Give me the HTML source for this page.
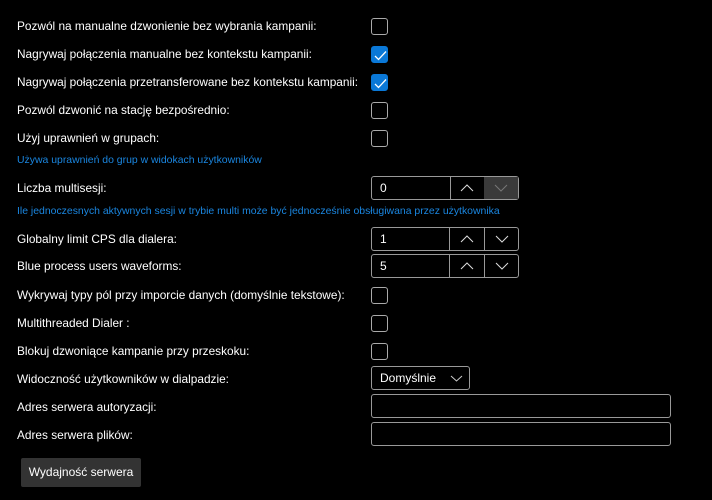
<!DOCTYPE html>
<html><head><meta charset="utf-8"><style>
*{box-sizing:border-box;margin:0;padding:0}
body{width:712px;height:500px;background:#000;color:#fff;font-family:"Liberation Sans",sans-serif;font-size:12px;position:relative;overflow:hidden}
.l{position:absolute;left:17px;white-space:nowrap;line-height:14px;font-size:11.85px}
.n{position:absolute;left:17px;white-space:nowrap;color:#1a86e0;font-size:10.45px;line-height:12px}
.cb{position:absolute;left:371px;width:17px;height:17px;border:1px solid #aaa;border-radius:3px}
.cb.on{background:#0a78d7;border-color:#0a78d7}
.cb.on svg{position:absolute;left:2px;top:2px}
.sp{position:absolute;left:371px;width:148px;height:24px;border:1px solid #999;border-radius:3px;display:flex}
.sp .v{width:79px;border-right:1px solid #999;padding-left:8px;line-height:22px;font-size:12px}
.sp .b{width:34px;display:flex;align-items:center;justify-content:center}
.sp .b+.b{border-left:1px solid #999}
.sp .b.dis{background:#3a3a3a;border-left:none}
.tb{position:absolute;left:371px;width:300px;height:24px;border:1px solid #999;border-radius:3px}
</style></head><body>
<div class="l" style="top:19px">Pozwól na manualne dzwonienie bez wybrania kampanii:</div>
<div class="cb" style="top:18px"></div>
<div class="l" style="top:47px">Nagrywaj połączenia manualne bez kontekstu kampanii:</div>
<div class="cb on" style="top:46px"><svg width="13" height="13" viewBox="0 0 13 13"><path d="M1 7l3.5 3.5L12 2.5" fill="none" stroke="#fff" stroke-width="1.3"/></svg></div>
<div class="l" style="top:75px">Nagrywaj połączenia przetransferowane bez kontekstu kampanii:</div>
<div class="cb on" style="top:74px"><svg width="13" height="13" viewBox="0 0 13 13"><path d="M1 7l3.5 3.5L12 2.5" fill="none" stroke="#fff" stroke-width="1.3"/></svg></div>
<div class="l" style="top:103px">Pozwól dzwonić na stację bezpośrednio:</div>
<div class="cb" style="top:102px"></div>
<div class="l" style="top:131px">Użyj uprawnień w grupach:</div>
<div class="cb" style="top:130px"></div>
<div class="n" style="top:155px">Używa uprawnień do grup w widokach użytkowników</div>
<div class="l" style="top:181px">Liczba multisesji:</div>
<div class="sp" style="top:176px"><div class="v">0</div><div class="b"><svg width="14" height="8"><path d="M1 7l6-6 6 6" fill="none" stroke="#ddd"/></svg></div><div class="b dis"><svg width="14" height="8"><path d="M1 1l6 6 6-6" fill="none" stroke="#777"/></svg></div></div>
<div class="n" style="top:206px">Ile jednoczesnych aktywnych sesji w trybie multi może być jednocześnie obsługiwana przez użytkownika</div>
<div class="l" style="top:232px">Globalny limit CPS dla dialera:</div>
<div class="sp" style="top:227px"><div class="v">1</div><div class="b"><svg width="14" height="8"><path d="M1 7l6-6 6 6" fill="none" stroke="#ddd"/></svg></div><div class="b"><svg width="14" height="8"><path d="M1 1l6 6 6-6" fill="none" stroke="#ddd"/></svg></div></div>
<div class="l" style="top:259px">Blue process users waveforms:</div>
<div class="sp" style="top:254px"><div class="v">5</div><div class="b"><svg width="14" height="8"><path d="M1 7l6-6 6 6" fill="none" stroke="#ddd"/></svg></div><div class="b"><svg width="14" height="8"><path d="M1 1l6 6 6-6" fill="none" stroke="#ddd"/></svg></div></div>
<div class="l" style="top:288px">Wykrywaj typy pól przy imporcie danych (domyślnie tekstowe):</div>
<div class="cb" style="top:287px"></div>
<div class="l" style="top:316px">Multithreaded Dialer :</div>
<div class="cb" style="top:315px"></div>
<div class="l" style="top:344px">Blokuj dzwoniące kampanie przy przeskoku:</div>
<div class="cb" style="top:343px"></div>
<div class="l" style="top:372px">Widoczność użytkowników w dialpadzie:</div>
<div style="position:absolute;left:371px;top:366px;width:99px;height:24px;border:1px solid #999;border-radius:3px;padding-left:8px;line-height:22px">Domyślnie<svg style="position:absolute;left:78px;top:8px" width="13" height="7"><path d="M1 1l5.5 5 5.5-5" fill="none" stroke="#ccc"/></svg></div>
<div class="l" style="top:400px">Adres serwera autoryzacji:</div>
<div class="tb" style="top:394px"></div>
<div class="l" style="top:428px">Adres serwera plików:</div>
<div class="tb" style="top:422px"></div>
<div style="position:absolute;left:21px;top:458px;width:120px;height:29px;background:#333;border-radius:2px;text-align:center;line-height:29px">Wydajność serwera</div>
</body></html>
